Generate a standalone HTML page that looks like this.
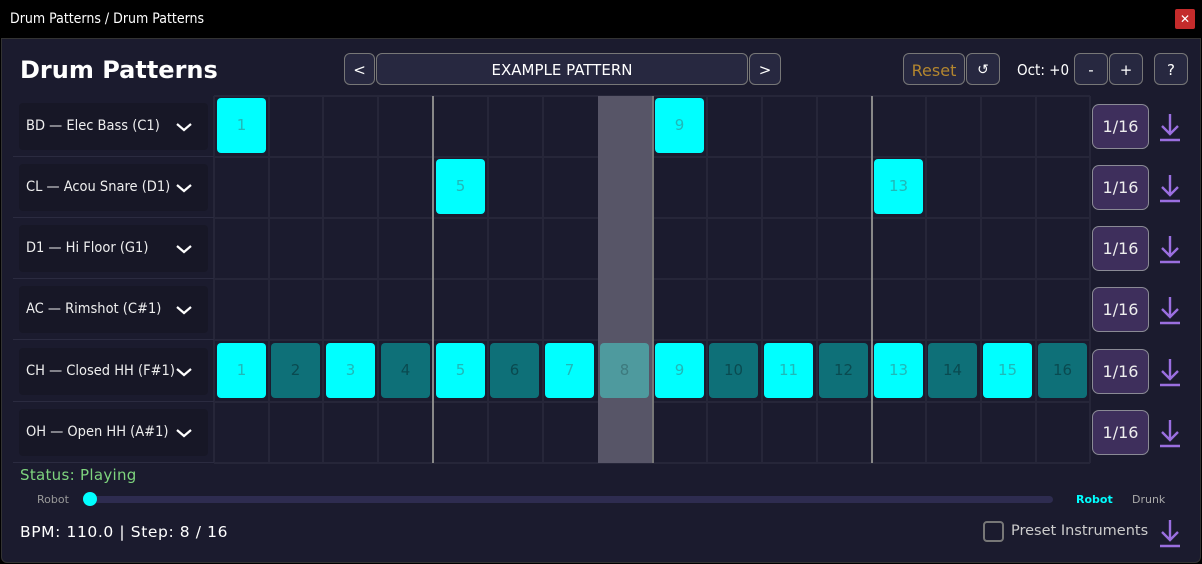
<!DOCTYPE html>
<html><head><meta charset="utf-8"><style>
*{box-sizing:border-box;margin:0;padding:0}
body{width:1202px;height:564px;background:#000;font-family:"DejaVu Sans","Liberation Sans",sans-serif;position:relative;overflow:hidden}
.a{position:absolute}
#tb{left:0;top:0;width:1202px;height:38px;background:#000;color:#fff;font-size:14px;padding:11px 10px;font-family:"DejaVu Sans Condensed","DejaVu Sans",sans-serif}
#x{left:1175px;top:9px;width:20px;height:20px;background:#c42b2b;color:#fff;font-size:12px;text-align:center;line-height:20px;border-radius:2px}
#win{left:1px;top:38px;width:1200px;height:525px;background:#1b1b2e;border-radius:0 0 6px 6px;border:1px solid #333}
h1{position:absolute;left:20px;top:56px;font-size:24px;color:#fff;font-weight:bold}
.btn{position:absolute;background:#272840;border:1px solid #777;border-radius:6px;color:#fff;text-align:center;font-size:15px;line-height:33px}
.vl{position:absolute;top:96px;height:367px;width:2px;background:#262639}
.hl{position:absolute;left:214px;width:876px;height:2px;background:#262639}
.lb{position:absolute;left:19px;width:189px;height:47px;background:#171726;border-radius:4px;color:#eee;font-size:14.5px;line-height:47px;padding-left:7px;font-family:"DejaVu Sans Condensed","DejaVu Sans",sans-serif;white-space:nowrap}
.lb svg{position:absolute;left:156px;top:19px}
.rs{position:absolute;left:13px;width:201px;height:1px;background:#2b2b40}
.c{position:absolute;width:49px;height:55px;border-radius:4px;background:#00ffff;color:#20b8b8;font-size:15px;text-align:center;line-height:55px}
.d{background:#0e7078;color:#0a4a50}
.r{position:absolute;left:1092px;width:57px;height:45px;background:#3e2f5c;border:1px solid #8a8a95;border-radius:7px;color:#eee;font-size:16px;text-align:center;line-height:43px}
.dl{position:absolute;left:1159px}
</style></head><body>
<div id="tb" class="a">Drum Patterns / Drum Patterns</div>
<div id="x" class="a">✕</div>
<div id="win" class="a"></div>
<h1>Drum Patterns</h1>
<div class="btn" style="left:344px;top:53px;width:31px;height:32px">&lt;</div>
<div class="btn" style="left:376px;top:53px;width:372px;height:32px">EXAMPLE PATTERN</div>
<div class="btn" style="left:749px;top:53px;width:32px;height:32px">&gt;</div>
<div class="btn" style="left:903px;top:53px;width:62px;height:32px;color:#b3862f;font-size:16px">Reset</div>
<div class="btn" style="left:966px;top:53px;width:34px;height:32px;font-size:14px">↺</div>
<div class="a" style="left:1017px;top:61px;color:#fff;font-size:15px;font-family:'DejaVu Sans Condensed','DejaVu Sans',sans-serif">Oct: +0</div>
<div class="btn" style="left:1074px;top:53px;width:34px;height:32px">-</div>
<div class="btn" style="left:1109px;top:53px;width:34px;height:32px">+</div>
<div class="btn" style="left:1154px;top:53px;width:34px;height:32px">?</div>

<div class="hl" style="top:95px"></div><div class="hl" style="top:156px"></div><div class="hl" style="top:217px"></div><div class="hl" style="top:278px"></div><div class="hl" style="top:339px"></div><div class="hl" style="top:401px"></div><div class="hl" style="top:462px"></div>
<div class="vl" style="left:213px"></div><div class="vl" style="left:268px"></div><div class="vl" style="left:322px"></div><div class="vl" style="left:377px"></div><div class="vl" style="left:487px"></div><div class="vl" style="left:542px"></div><div class="vl" style="left:706px"></div><div class="vl" style="left:761px"></div><div class="vl" style="left:816px"></div><div class="vl" style="left:925px"></div><div class="vl" style="left:980px"></div><div class="vl" style="left:1035px"></div><div class="vl" style="left:1089px"></div>
<div class="a" style="left:598px;top:96px;width:55px;height:367px;background:#575567"></div>
<div class="a" style="left:432px;top:96px;width:2px;height:367px;background:#888"></div>
<div class="a" style="left:871px;top:96px;width:2px;height:367px;background:#888"></div>
<div class="a" style="left:652px;top:96px;width:2px;height:367px;background:#777"></div>

<div class="rs" style="top:156px"></div><div class="rs" style="top:217px"></div><div class="rs" style="top:278px"></div><div class="rs" style="top:339px"></div><div class="rs" style="top:401px"></div><div class="rs" style="top:462px"></div>
<div class="lb" style="top:103px">BD — Elec Bass (C1)<svg width="18" height="10"><path d="M2 2l7 6 7-6" stroke="#fff" stroke-width="2.2" fill="none"/></svg></div>
<div class="lb" style="top:164px">CL — Acou Snare (D1)<svg width="18" height="10"><path d="M2 2l7 6 7-6" stroke="#fff" stroke-width="2.2" fill="none"/></svg></div>
<div class="lb" style="top:225px">D1 — Hi Floor (G1)<svg width="18" height="10"><path d="M2 2l7 6 7-6" stroke="#fff" stroke-width="2.2" fill="none"/></svg></div>
<div class="lb" style="top:286px">AC — Rimshot (C#1)<svg width="18" height="10"><path d="M2 2l7 6 7-6" stroke="#fff" stroke-width="2.2" fill="none"/></svg></div>
<div class="lb" style="top:348px">CH — Closed HH (F#1)<svg width="18" height="10"><path d="M2 2l7 6 7-6" stroke="#fff" stroke-width="2.2" fill="none"/></svg></div>
<div class="lb" style="top:409px">OH — Open HH (A#1)<svg width="18" height="10"><path d="M2 2l7 6 7-6" stroke="#fff" stroke-width="2.2" fill="none"/></svg></div>

<div class="c" style="left:217px;top:98px">1</div>
<div class="c" style="left:655px;top:98px">9</div>
<div class="c" style="left:436px;top:159px">5</div>
<div class="c" style="left:874px;top:159px">13</div>
<div class="c" style="left:217px;top:343px">1</div>
<div class="c d" style="left:271px;top:343px">2</div>
<div class="c" style="left:326px;top:343px">3</div>
<div class="c d" style="left:381px;top:343px">4</div>
<div class="c" style="left:436px;top:343px">5</div>
<div class="c d" style="left:490px;top:343px">6</div>
<div class="c" style="left:545px;top:343px">7</div>
<div class="c" style="left:600px;top:343px;background:#4e9a9e;color:#3d7a7e">8</div>
<div class="c" style="left:655px;top:343px">9</div>
<div class="c d" style="left:709px;top:343px">10</div>
<div class="c" style="left:764px;top:343px">11</div>
<div class="c d" style="left:819px;top:343px">12</div>
<div class="c" style="left:874px;top:343px">13</div>
<div class="c d" style="left:928px;top:343px">14</div>
<div class="c" style="left:983px;top:343px">15</div>
<div class="c d" style="left:1038px;top:343px">16</div>

<div class="r" style="top:104px">1/16</div><div class="r" style="top:165px">1/16</div><div class="r" style="top:226px">1/16</div><div class="r" style="top:287px">1/16</div><div class="r" style="top:349px">1/16</div><div class="r" style="top:410px">1/16</div>
<svg class="dl" style="top:112px" width="22" height="30"><path d="M11 2v20M3 14l8 8 8-8M1 28h20" stroke="#9b6fe0" stroke-width="2.4" fill="none"/></svg>
<svg class="dl" style="top:173px" width="22" height="30"><path d="M11 2v20M3 14l8 8 8-8M1 28h20" stroke="#9b6fe0" stroke-width="2.4" fill="none"/></svg>
<svg class="dl" style="top:234px" width="22" height="30"><path d="M11 2v20M3 14l8 8 8-8M1 28h20" stroke="#9b6fe0" stroke-width="2.4" fill="none"/></svg>
<svg class="dl" style="top:295px" width="22" height="30"><path d="M11 2v20M3 14l8 8 8-8M1 28h20" stroke="#9b6fe0" stroke-width="2.4" fill="none"/></svg>
<svg class="dl" style="top:357px" width="22" height="30"><path d="M11 2v20M3 14l8 8 8-8M1 28h20" stroke="#9b6fe0" stroke-width="2.4" fill="none"/></svg>
<svg class="dl" style="top:418px" width="22" height="30"><path d="M11 2v20M3 14l8 8 8-8M1 28h20" stroke="#9b6fe0" stroke-width="2.4" fill="none"/></svg>

<div class="a" style="left:20px;top:466px;color:#7ed47e;font-size:15px;letter-spacing:0.3px">Status: Playing</div>
<div class="a" style="left:37px;top:493px;color:#999;font-size:11px">Robot</div>
<div class="a" style="left:86px;top:496px;width:967px;height:7px;background:#2e2c50;border-radius:4px"></div>
<div class="a" style="left:83px;top:492px;width:14px;height:14px;background:#00ffff;border-radius:50%"></div>
<div class="a" style="left:1076px;top:493px;color:#00ffff;font-size:11px;font-weight:bold">Robot</div>
<div class="a" style="left:1132px;top:493px;color:#aaa;font-size:11px">Drunk</div>
<div class="a" style="left:20px;top:523px;color:#fff;font-size:15.5px;letter-spacing:0.6px">BPM: 110.0 | Step: 8 / 16</div>
<div class="a" style="left:983px;top:521px;width:21px;height:21px;border:2px solid #777;border-radius:4px"></div>
<div class="a" style="left:1011px;top:523px;color:#ccc;font-size:14.5px">Preset Instruments</div>
<svg class="dl" style="top:518px" width="22" height="30"><path d="M11 2v20M3 14l8 8 8-8M1 28h20" stroke="#9b6fe0" stroke-width="2.4" fill="none"/></svg>
</body></html>
